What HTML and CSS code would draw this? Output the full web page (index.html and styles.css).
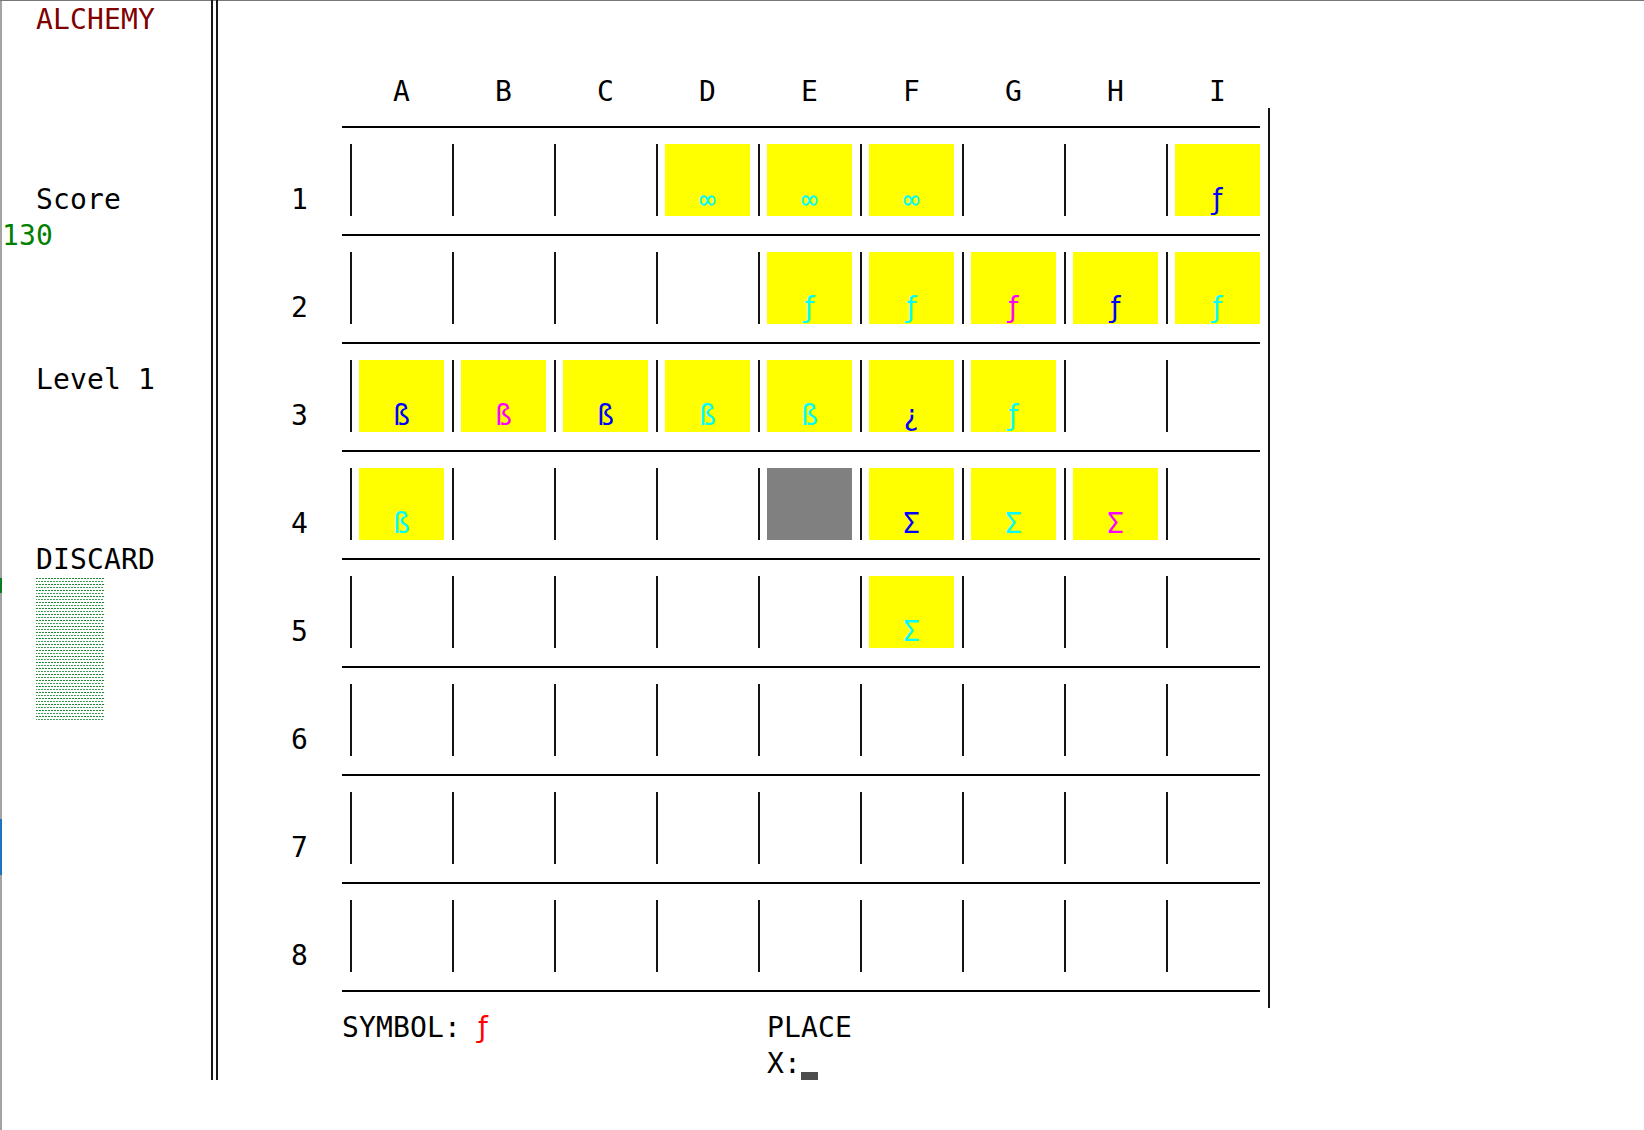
FILE: index.html
```html
<!DOCTYPE html>
<html lang="en">
<head>
    <meta charset="UTF-8">
    <meta name="viewport" content="width=device-width, initial-scale=1.0">
    <title>ALCHEMY</title>

    <link rel="stylesheet" href="styles.css">
</head>
<body>
<div class="screen">
    <aside class="side">
        <div class="title">ALCHEMY</div>
        <div class="label score-label">Score</div>
        <div class="score">130</div>
        <div class="label level">Level 1</div>
        <div class="label discard">DISCARD</div>
        <div class="pile"></div>
    </aside>

    <div class="divider"></div>

    <main class="play">
        <div class="board-head">
            <span>A</span><span>B</span><span>C</span><span>D</span><span>E</span><span>F</span><span>G</span><span>H</span><span>I</span>
        </div>

        <div class="board">
            <div class="rows">
                <div class="sep"></div>
                <div class="row">
                    <div class="num">1</div>
                    <div class="cell"></div>
                    <div class="cell"></div>
                    <div class="cell"></div>
                    <div class="cell"><div class="tile gold cyan">∞</div></div>
                    <div class="cell"><div class="tile gold cyan">∞</div></div>
                    <div class="cell"><div class="tile gold cyan">∞</div></div>
                    <div class="cell"></div>
                    <div class="cell"></div>
                    <div class="cell"><div class="tile gold blue fn">ƒ</div></div>
                </div>

                <div class="sep"></div>
                <div class="row">
                    <div class="num">2</div>
                    <div class="cell"></div>
                    <div class="cell"></div>
                    <div class="cell"></div>
                    <div class="cell"></div>
                    <div class="cell"><div class="tile gold cyan fn">ƒ</div></div>
                    <div class="cell"><div class="tile gold cyan fn">ƒ</div></div>
                    <div class="cell"><div class="tile gold magenta fn">ƒ</div></div>
                    <div class="cell"><div class="tile gold blue fn">ƒ</div></div>
                    <div class="cell"><div class="tile gold cyan fn">ƒ</div></div>
                </div>

                <div class="sep"></div>
                <div class="row">
                    <div class="num">3</div>
                    <div class="cell"><div class="tile gold blue">ß</div></div>
                    <div class="cell"><div class="tile gold magenta">ß</div></div>
                    <div class="cell"><div class="tile gold blue">ß</div></div>
                    <div class="cell"><div class="tile gold cyan">ß</div></div>
                    <div class="cell"><div class="tile gold cyan">ß</div></div>
                    <div class="cell"><div class="tile gold blue">¿</div></div>
                    <div class="cell"><div class="tile gold cyan fn">ƒ</div></div>
                    <div class="cell"></div>
                    <div class="cell"></div>
                </div>

                <div class="sep"></div>
                <div class="row">
                    <div class="num">4</div>
                    <div class="cell"><div class="tile gold cyan">ß</div></div>
                    <div class="cell"></div>
                    <div class="cell"></div>
                    <div class="cell"></div>
                    <div class="cell"><div class="tile stone"></div></div>
                    <div class="cell"><div class="tile gold blue">Σ</div></div>
                    <div class="cell"><div class="tile gold cyan">Σ</div></div>
                    <div class="cell"><div class="tile gold magenta">Σ</div></div>
                    <div class="cell"></div>
                </div>

                <div class="sep"></div>
                <div class="row">
                    <div class="num">5</div>
                    <div class="cell"></div>
                    <div class="cell"></div>
                    <div class="cell"></div>
                    <div class="cell"></div>
                    <div class="cell"></div>
                    <div class="cell"><div class="tile gold cyan">Σ</div></div>
                    <div class="cell"></div>
                    <div class="cell"></div>
                    <div class="cell"></div>
                </div>

                <div class="sep"></div>
                <div class="row">
                    <div class="num">6</div>
                    <div class="cell"></div>
                    <div class="cell"></div>
                    <div class="cell"></div>
                    <div class="cell"></div>
                    <div class="cell"></div>
                    <div class="cell"></div>
                    <div class="cell"></div>
                    <div class="cell"></div>
                    <div class="cell"></div>
                </div>

                <div class="sep"></div>
                <div class="row">
                    <div class="num">7</div>
                    <div class="cell"></div>
                    <div class="cell"></div>
                    <div class="cell"></div>
                    <div class="cell"></div>
                    <div class="cell"></div>
                    <div class="cell"></div>
                    <div class="cell"></div>
                    <div class="cell"></div>
                    <div class="cell"></div>
                </div>

                <div class="sep"></div>
                <div class="row">
                    <div class="num">8</div>
                    <div class="cell"></div>
                    <div class="cell"></div>
                    <div class="cell"></div>
                    <div class="cell"></div>
                    <div class="cell"></div>
                    <div class="cell"></div>
                    <div class="cell"></div>
                    <div class="cell"></div>
                    <div class="cell"></div>
                </div>
                <div class="sep"></div>
            </div>
            <div class="rail"></div>
        </div>

        <div class="status">
            <div class="symbol">SYMBOL: <span class="current fn">ƒ</span></div>
            <div class="place">PLACE<br>X:<span class="cursor"></span></div>
        </div>
    </main>
</div>
</body>
</html>
```

FILE: styles.css
```css
body {
    margin: 0;
    background-color: white;
    font-family: "DejaVu Sans Mono", "Liberation Mono", monospace;
    font-size: 28px;
    letter-spacing: 0.14px;
    line-height: 36px;
    color: #000;
}

/* window edge: grey frame with bits of the windows behind it */
.screen {
    display: flex;
    align-items: flex-start;
    min-height: 1130px;
    padding-left: 2px;
    background: linear-gradient(to bottom, #a3a3a3 578px, #0b7d1f 578px 593px, #a3a3a3 593px 819px, #1c74bd 819px 875px, #a3a3a3 875px) 0 0 / 2px 100% no-repeat;
    box-shadow: inset 0 1px #777;
}

.side {
    width: 204px;
    flex: none;
    padding-top: 2px;
}

.title {
    padding-left: 34px;
    color: #800000;
}

.label {
    padding-left: 34px;
}

.score-label {
    margin-top: 144px;
}

.score {
    color: #008000;
}

.level {
    margin-top: 108px;
}

.discard {
    margin-top: 144px;
}

.pile {
    width: 68px;
    height: 142px;
    margin-left: 34px;
    background:
        conic-gradient(at 2px 1px, transparent 75%, #1e8a36 0) 0 0 / 3px 6px,
        conic-gradient(at 2px 1px, transparent 75%, #3d9a5a 0) 2px 3px / 3px 6px;
}

.divider {
    width: 17px;
    height: 1080px;
    flex: none;
    background:
        linear-gradient(#1a1a1a, #1a1a1a) 5px 0 / 2px 100% no-repeat,
        linear-gradient(#1a1a1a, #1a1a1a) 10px 0 / 2px 100% no-repeat;
}

.play {
    padding: 72px 0 0 68px;
}

.board-head {
    display: flex;
    height: 36px;
    padding: 2px 0 0 51px;
    box-sizing: border-box;
}

.board-head span {
    width: 102px;
    padding-left: 51px;
    box-sizing: border-box;
}

.board {
    display: flex;
}

.rows {
    width: 969px;
}

.sep {
    height: 36px;
    margin-left: 51px;
    background: linear-gradient(#000, #000) 0 18px / 100% 2px no-repeat;
}

.row {
    display: flex;
    height: 72px;
}

.num {
    width: 51px;
    padding-top: 38px;
    box-sizing: border-box;
}

.cell {
    display: flex;
    width: 102px;
}

.cell::before {
    content: "";
    width: 2px;
    margin: 0 7px 0 8px;
    background: #141414;
}

.tile {
    width: 85px;
    padding-top: 38px;
    box-sizing: border-box;
    text-align: center;
}

/* the hooked florin of the console font is closer to the proportional one */
.fn {
    font-family: "DejaVu Sans", sans-serif;
}

.gold {
    background: #ffff00;
}

.stone {
    background: #808080;
}

.cyan {
    color: #00ffff;
}

.blue {
    color: #0000ff;
}

.magenta {
    color: #ff00ff;
}

.rail {
    width: 17px;
    background: linear-gradient(#141414, #141414) 8px 0 / 2px 100% no-repeat;
}

.status {
    display: flex;
    margin-left: 51px;
    padding-top: 2px;
}

.symbol {
    width: 425px;
}

.current {
    color: #ff0000;
}

.cursor {
    display: inline-block;
    width: 17px;
    height: 8px;
    margin-bottom: 2px;
    background: #4d4d4d;
    vertical-align: bottom;
}
```
